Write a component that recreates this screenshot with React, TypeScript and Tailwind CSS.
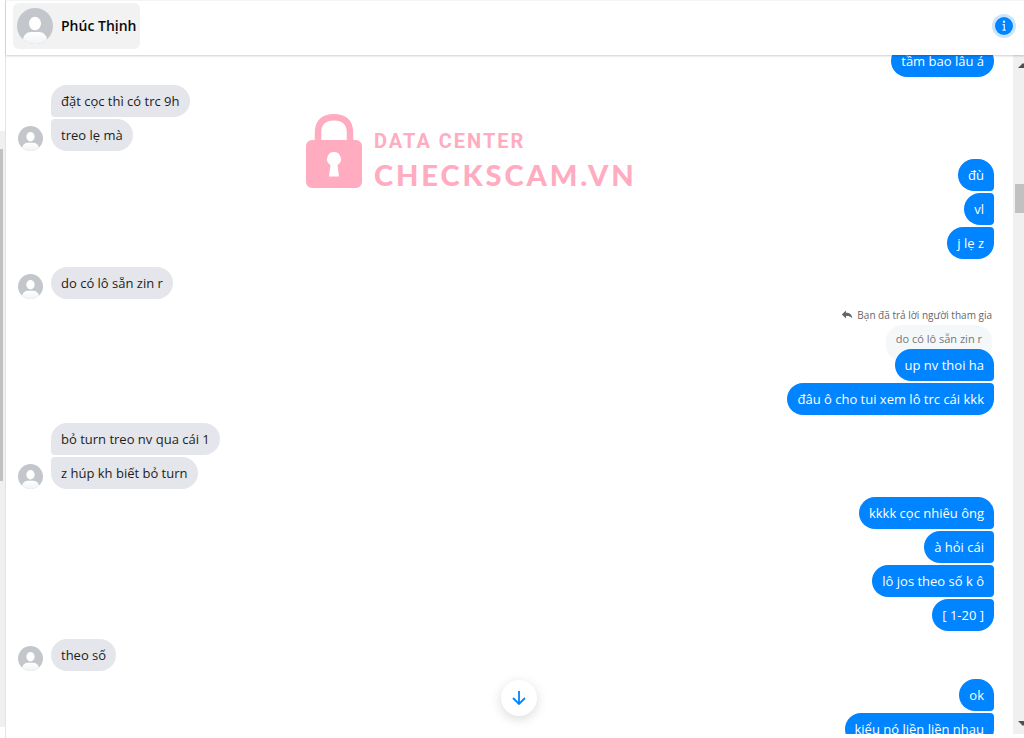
import clsx from 'clsx'

type Group = {
  mine: boolean
  reply?: { note: string; quote: string }
  messages: string[]
}

const groups: Group[] = [
  { mine: true, messages: ['tầm bao lâu á'] },
  { mine: false, messages: ['đặt cọc thì có trc 9h', 'treo lẹ mà'] },
  { mine: true, messages: ['đù', 'vl', 'j lẹ z'] },
  { mine: false, messages: ['do có lô sẵn zin r'] },
  {
    mine: true,
    reply: { note: 'Bạn đã trả lời người tham gia', quote: 'do có lô sẵn zin r' },
    messages: ['up nv thoi ha', 'đâu ô cho tui xem lô trc cái kkk'],
  },
  { mine: false, messages: ['bỏ turn treo nv qua cái 1', 'z húp kh biết bỏ turn'] },
  { mine: true, messages: ['kkkk cọc nhiêu ông', 'à hỏi cái', 'lô jos theo số k ô', '[ 1-20 ]'] },
  { mine: false, messages: ['theo số'] },
  { mine: true, messages: ['ok', 'kiểu nó liền liền nhau'] },
]

function Avatar({ className }: { className?: string }) {
  return (
    <svg viewBox="0 0 36 36" className={clsx('shrink-0 rounded-full', className)} aria-hidden="true">
      <defs>
        <linearGradient id="shoulders" x1="0" y1="0" x2="0" y2="1">
          <stop offset="0" stopColor="#ffffff" />
          <stop offset="1" stopColor="#f0f2f4" />
        </linearGradient>
      </defs>
      <rect width="36" height="36" fill="#c3c7cc" />
      <ellipse cx="18" cy="15.500" rx="6" ry="6.800" fill="#fff" />
      <path d="M5 36c.5-8 4-12 9-12h8c5 0 8.500 4 9 12z" fill="url(#shoulders)" />
    </svg>
  )
}

function Header() {
  return (
    <header className="relative z-10 flex h-[55px] shrink-0 items-center justify-between border-t border-gray-100 bg-white pr-2 pb-1 pl-[7px] shadow-[0_1px_2px_rgba(0,0,0,0.2)]">
      <a href="#profile" className="flex h-[46px] items-center gap-2 rounded-md bg-[#f2f2f2] px-1">
        <Avatar className="size-9" />
        <span className="text-sm font-semibold text-[#080809]">Phúc Thịnh</span>
      </a>
      <button
        aria-label="Conversation information"
        className="flex size-6 items-center justify-center rounded-full bg-[#cde5fc]"
      >
        <svg viewBox="0 0 18 18" className="size-[18px]">
          <circle cx="9" cy="9" r="9" fill="#0084ff" />
          <circle cx="9" cy="4.800" r="1.200" fill="#d9ecff" />
          <path d="M7.500 7.600h1.800v5.600M7.500 13.200h3.300" fill="none" stroke="#d9ecff" strokeWidth="1.300" />
        </svg>
      </button>
    </header>
  )
}

function MessageGroup({ group }: { group: Group }) {
  const { mine, reply, messages } = group
  const last = messages.length - 1

  return (
    <div className={clsx('flex items-end gap-2', mine && 'justify-end')}>
      {!mine && <Avatar className="size-[25px]" />}
      <div className={clsx('flex min-w-0 flex-col gap-0.5', mine ? 'items-end' : 'items-start')}>
        {reply && (
          <>
            <p className="flex h-4 items-center gap-1 pr-0.5 text-[10px] text-[#65676b]">
              <svg viewBox="0 0 12 10" className="h-2.5 w-3" fill="#65676b" aria-hidden="true">
                <path d="M5 .5v2.300c3.800 0 6 1.700 6.300 5.700C10 6.600 8.300 6 5 6v2.400L.8 4.500z" />
              </svg>
              {reply.note}
            </p>
            <blockquote className="-mb-3.5 mr-0.5 h-9 rounded-2xl bg-[#f5f8f9] px-2.5 pt-1.5 text-[11px] text-[#747679]">
              {reply.quote}
            </blockquote>
          </>
        )}
        {messages.map((text, i) => (
          <p
            key={text}
            className={clsx(
              'relative h-8 rounded-2xl px-2.5 text-[13px] leading-8',
              mine ? 'bg-[#0084ff] text-white' : 'bg-[#e4e6eb] text-[#1c1e21]',
              mine && i > 0 && 'rounded-tr',
              mine && i < last && 'rounded-br',
              !mine && i > 0 && 'rounded-tl',
              !mine && i < last && 'rounded-bl',
            )}
          >
            {text}
          </p>
        ))}
      </div>
    </div>
  )
}

function Watermark() {
  return (
    <div className="pointer-events-none absolute top-[58px] left-[300px] flex items-start gap-3 whitespace-nowrap text-[#ffabc0]">
      <svg viewBox="0 0 56 75" className="h-[75px] w-14" fill="currentColor" aria-hidden="true">
        <path d="M12 29V19.500C12 9 18 4.200 28 4.200S44 9 44 19.500V29" fill="none" stroke="currentColor" strokeWidth="6.500" />
        <path
          fillRule="evenodd"
          d="M6 27h44a6 6 0 0 1 6 6v36a6 6 0 0 1-6 6H6a6 6 0 0 1-6-6V33a6 6 0 0 1 6-6zM28 39a7 7 0 0 0-3.500 13L23 63.500h10L31.500 52A7 7 0 0 0 28 39z"
        />
      </svg>
      <div className="pt-3.5">
        <p className="font-[Roboto,sans-serif] text-xl leading-7 font-bold tracking-widest">DATA CENTER</p>
        <p className="font-[Lato,sans-serif] text-[29px] leading-10 font-black tracking-widest">CHECKSCAM.VN</p>
      </div>
    </div>
  )
}

export default function App() {
  return (
    <div className="flex h-screen overflow-hidden bg-white font-['Open_Sans','Noto_Sans',sans-serif]">
      {/* edge of the conversation list */}
      <aside className="flex w-1.5 shrink-0 flex-col border-r border-[#e4e4e4] pt-[131px] pb-[11px]">
        <div className="flex-1 bg-[#f0f0f0] pt-[18px]">
          <div className="h-[332px] w-[3px] bg-[#c1c1c1]" />
        </div>
      </aside>

      <main className="flex min-w-0 flex-1 flex-col pb-1">
        <Header />
        <div className="relative flex min-h-0 flex-1">
          <section className="min-w-0 flex-1 overflow-hidden pr-[19px] pl-3">
            <div className="-mt-2.5 flex flex-col gap-2">
              {groups.map((group, i) => (
                <MessageGroup key={i} group={group} />
              ))}
            </div>
          </section>

          {/* scrollbar */}
          <div className="flex w-[11px] shrink-0 flex-col items-end justify-between overflow-hidden bg-[#f0f0f0] py-2">
            <svg viewBox="0 0 6 5" className="h-[5px] w-1.5" fill="#505050">
              <path d="M0 5 5 0l1 1v4z" />
            </svg>
            <div className="mt-[116px] mb-auto h-[29px] w-[9px] bg-[#c1c1c1]" />
            <svg viewBox="0 0 6 5" className="h-[5px] w-1.5" fill="#505050">
              <path d="M0 0 5 5l1-1V0z" />
            </svg>
          </div>

          <Watermark />

          <div className="pointer-events-none absolute inset-x-0 bottom-[18px] flex justify-center pl-2">
            <button
              aria-label="Scroll to latest"
              className="pointer-events-auto flex size-9 items-center justify-center rounded-full bg-white shadow-[0_3px_12px_rgba(0,0,0,0.15)]"
            >
              <svg viewBox="0 0 14 16" className="h-4 w-3.5" fill="none" stroke="#0084ff" strokeWidth="1.800">
                <path d="M7 1v13M1 8l6 6 6-6" />
              </svg>
            </button>
          </div>
        </div>
      </main>
    </div>
  )
}
